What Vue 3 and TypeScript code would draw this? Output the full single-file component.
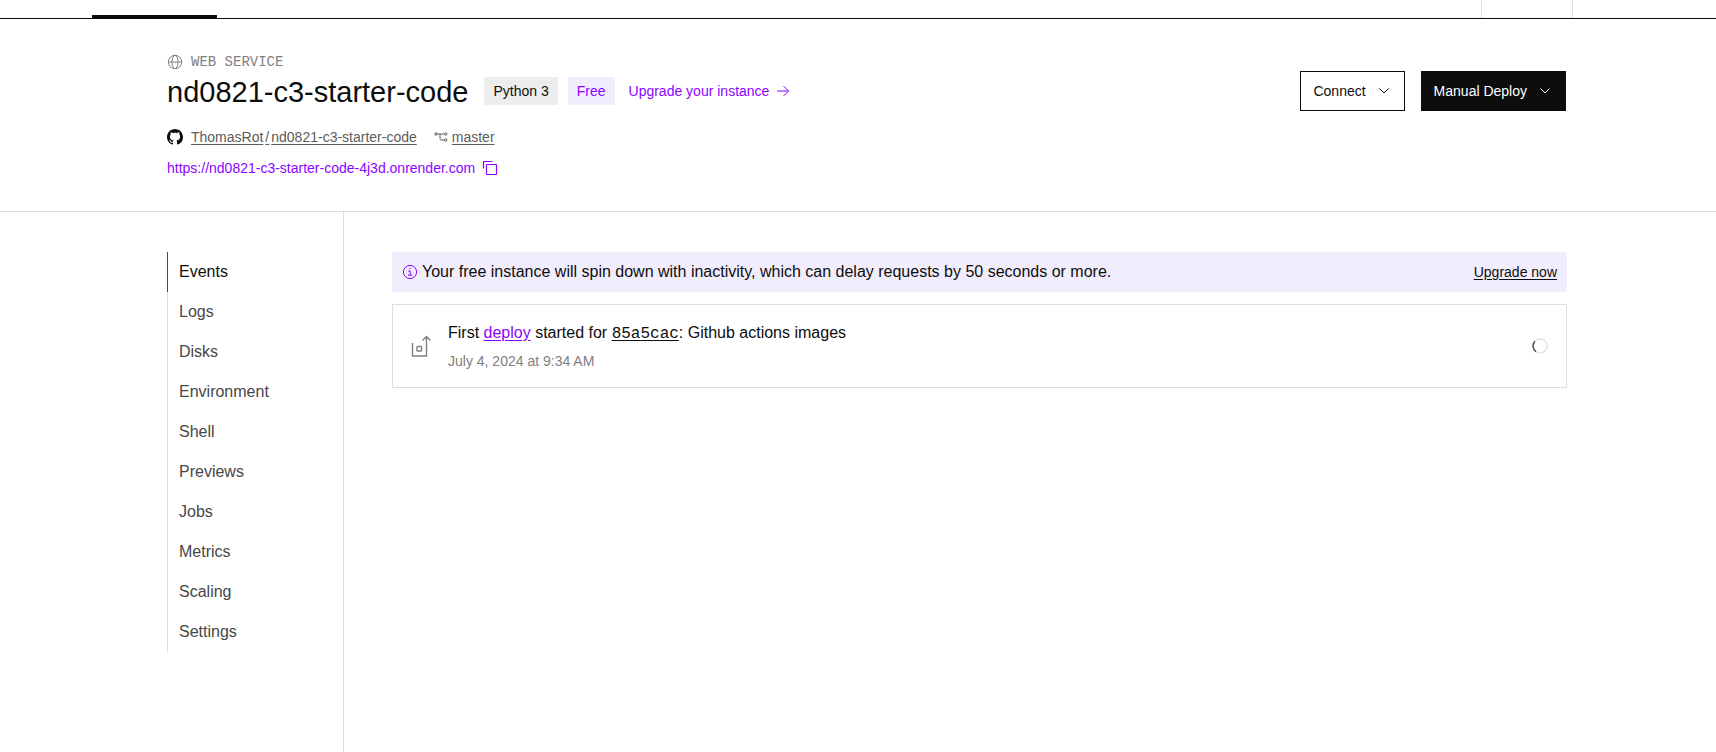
<script setup lang="ts">
interface NavItem {
  label: string
  href: string
  active?: boolean
}

const navItems: NavItem[] = [
  { label: 'Events', href: '#events', active: true },
  { label: 'Logs', href: '#logs' },
  { label: 'Disks', href: '#disks' },
  { label: 'Environment', href: '#environment' },
  { label: 'Shell', href: '#shell' },
  { label: 'Previews', href: '#previews' },
  { label: 'Jobs', href: '#jobs' },
  { label: 'Metrics', href: '#metrics' },
  { label: 'Scaling', href: '#scaling' },
  { label: 'Settings', href: '#settings' },
]
</script>

<template>
  <div class="page">
    <div class="topbar">
      <div class="topbar-tab"></div>
      <div class="topbar-cell"></div>
    </div>

    <header class="service-header">
      <div class="service-info">
        <div class="kind">
          <svg class="icon-16" viewBox="0 0 16 16" fill="none" stroke="currentColor">
            <circle cx="8" cy="8" r="6.7" />
            <ellipse cx="8" cy="8" rx="3" ry="6.7" />
            <path d="M1.3 8h13.4" />
          </svg>
          <span>WEB SERVICE</span>
        </div>
        <div class="title-row">
          <h1>nd0821-c3-starter-code</h1>
          <div class="badges">
            <span class="badge">Python 3</span>
            <span class="badge badge-free">Free</span>
          </div>
          <a class="upgrade" href="#upgrade">
            <span>Upgrade your instance</span>
            <svg class="icon-14" viewBox="0 0 14 14" fill="none" stroke="currentColor">
              <path d="M1 7h11.5M7.5 2l5 5-5 5" />
            </svg>
          </a>
        </div>
        <div class="repo-row">
          <svg class="icon-16 github" viewBox="0 0 16 16" fill="currentColor">
            <path d="M8 0C3.58 0 0 3.58 0 8c0 3.54 2.29 6.53 5.47 7.59.4.07.55-.17.55-.38 0-.19-.01-.82-.01-1.49-2.01.37-2.53-.49-2.69-.94-.09-.23-.48-.94-.82-1.13-.28-.15-.68-.52-.01-.53.63-.01 1.08.58 1.23.82.72 1.21 1.87.87 2.33.66.07-.52.28-.87.51-1.07-1.78-.2-3.64-.89-3.64-3.95 0-.87.31-1.59.82-2.15-.08-.2-.36-1.02.08-2.12 0 0 .67-.21 2.2.82.64-.18 1.32-.27 2-.27s1.36.09 2 .27c1.53-1.04 2.2-.82 2.2-.82.44 1.1.16 1.92.08 2.12.51.56.82 1.27.82 2.15 0 3.07-1.87 3.75-3.65 3.95.29.25.54.73.54 1.48 0 1.07-.01 1.93-.01 2.2 0 .21.15.46.55.38A8.01 8.01 0 0 0 16 8c0-4.42-3.58-8-8-8z" />
          </svg>
          <a class="repo" href="#repo">ThomasRot<span class="slash">/</span>nd0821-c3-starter-code</a>
          <svg class="icon-14 branch" viewBox="0 0 14 14" fill="none" stroke="currentColor">
            <circle cx="2" cy="4" r="1.2" />
            <path d="M3.2 4h7.2M6 4v4.5q0 1.5 1.5 1.5h3" />
            <rect x="10.5" y="2.8" width="2.4" height="2.4" rx="1" />
            <rect x="10.5" y="8.8" width="2.4" height="2.4" rx="1" />
          </svg>
          <a href="#branch">master</a>
        </div>
        <div class="url-row">
          <a href="#site">https://nd0821-c3-starter-code-4j3d.onrender.com</a>
          <button class="copy" type="button" aria-label="Copy URL">
            <svg class="icon-16" viewBox="0 0 16 16" fill="none" stroke="currentColor" stroke-width="1.2">
              <path d="M1.5 8.5v-7h9" />
              <rect x="4.5" y="4.5" width="10" height="10" rx=".5" />
            </svg>
          </button>
        </div>
      </div>

      <div class="actions">
        <button class="btn" type="button">
          <span>Connect</span>
          <svg class="icon-12" viewBox="0 0 12 12" fill="none" stroke="currentColor"><path d="M1.5 3.5 6 8l4.5-4.5" /></svg>
        </button>
        <button class="btn btn-dark" type="button">
          <span>Manual Deploy</span>
          <svg class="icon-12" viewBox="0 0 12 12" fill="none" stroke="currentColor"><path d="M1.5 3.5 6 8l4.5-4.5" /></svg>
        </button>
      </div>
    </header>

    <div class="body">
      <nav class="sidebar">
        <a
          v-for="item in navItems"
          :key="item.label"
          :href="item.href"
          :class="{ active: item.active }"
        >{{ item.label }}</a>
      </nav>

      <main class="content">
        <div class="banner">
          <svg class="icon-16 info" viewBox="0 0 16 16" fill="none" stroke="currentColor">
            <circle cx="8" cy="8" r="6.6" />
            <path d="M6.2 7h2v4M6 11.2h4.2M7.4 4.6h1.4" />
          </svg>
          <span class="banner-text">Your free instance will spin down with inactivity, which can delay requests by 50 seconds or more.</span>
          <a href="#upgrade">Upgrade now</a>
        </div>

        <article class="event">
          <svg class="event-icon" viewBox="0 0 20 22" fill="none" stroke="currentColor" stroke-width="1.4">
            <path d="M1.5 8v13h14V1.5M11.5 5.5l4-4 4 4" />
            <rect x="6" y="11.5" width="4.5" height="4.5" rx=".6" />
          </svg>
          <div class="event-text">
            <p>First <a class="deploy" href="#deploy">deploy</a> started for <a class="sha" href="#commit">85a5cac</a>: Github actions images</p>
            <time datetime="2024-07-04T09:34">July 4, 2024 at 9:34 AM</time>
          </div>
          <svg class="icon-16" viewBox="0 0 16 16" fill="none">
            <circle cx="8" cy="8" r="7" stroke="#e4e4e4" stroke-width="1.4" />
            <path d="M4 13.7A7 7 0 0 1 2.8 3.3" stroke="#444" stroke-width="1.4" />
          </svg>
        </article>
      </main>
    </div>
  </div>
</template>

<style>
body {
  margin: 0;
  background: #fff;
}
</style>

<style scoped>
* {
  box-sizing: border-box;
}

.page {
  display: flex;
  flex-direction: column;
  min-height: 100vh;
  font-family: 'Liberation Sans', Arial, sans-serif;
  font-size: 14px;
  line-height: 20px;
  color: #0d0d0d;
}

svg {
  display: block;
  flex: none;
}

.icon-12 { width: 12px; height: 12px; }
.icon-14 { width: 14px; height: 14px; }
.icon-16 { width: 16px; height: 16px; }

.topbar {
  display: flex;
  justify-content: space-between;
  height: 19px;
  padding: 0 143px 0 92px;
  border-bottom: 1px solid #0d0d0d;
}

.topbar-tab {
  width: 125px;
  border-bottom: 3px solid #0d0d0d;
}

.topbar-cell {
  width: 92px;
  border: solid #dedede;
  border-width: 0 1px;
}

.service-header {
  display: flex;
  justify-content: space-between;
  align-items: flex-start;
  padding: 33px 150px 33px 167px;
  border-bottom: 1px solid #dedede;
}

.kind {
  display: flex;
  align-items: center;
  gap: 8px;
  color: #808080;
  font-family: 'Liberation Mono', monospace;
}

.title-row {
  display: flex;
  align-items: center;
  height: 38px;
}

h1 {
  margin: 0;
  padding-top: 2px;
  font-size: 29px;
  line-height: 36px;
  font-weight: 400;
}

.badges {
  display: flex;
  gap: 10px;
  margin: 0 14px 0 16px;
}

.badge {
  padding: 4px 9px;
  background: #ededed;
}

.badge-free {
  background: #f2edfd;
  color: #8a05ff;
}

.upgrade {
  display: flex;
  align-items: center;
  gap: 7px;
  color: #8a05ff;
  text-decoration: none;
}

.repo-row {
  display: flex;
  align-items: center;
  margin-top: 17px;
  color: #0d0d0d;
}

.repo-row a {
  color: #5c5c5c;
  text-underline-offset: 2px;
}

.github {
  position: relative;
}

.repo {
  margin: 0 17px 0 8px;
}

.slash {
  padding: 0 2px;
}

.branch {
  margin-right: 4px;
  color: #5c5c5c;
}

.url-row {
  display: flex;
  align-items: center;
  gap: 7px;
  margin-top: 11px;
}

.url-row a,
.copy {
  color: #8a05ff;
  text-decoration: none;
}

.copy {
  padding: 0;
  border: 0;
  background: none;
}

.actions {
  display: flex;
  gap: 16px;
  margin-top: 19px;
}

.btn {
  display: flex;
  align-items: center;
  gap: 12px;
  height: 40px;
  padding: 0 14px 0 12px;
  border: 1px solid #0d0d0d;
  background: #fff;
  color: #0d0d0d;
  font: inherit;
}

.btn-dark {
  background: #0d0d0d;
  color: #fff;
}

.body {
  display: flex;
  flex: 1;
}

.sidebar {
  display: flex;
  flex-direction: column;
  width: 344px;
  flex: none;
  padding: 40px 0 40px 167px;
  border-right: 1px solid #dedede;
}

.sidebar a {
  padding: 8px 11px;
  border-left: 1px solid #dedede;
  color: #474747;
  font-size: 16px;
  line-height: 24px;
  text-decoration: none;
}

.sidebar a.active {
  border-left-color: #8a05ff;
  color: #0d0d0d;
}

.content {
  flex: 1;
  min-width: 0;
  padding: 40px 149px 40px 48px;
}

.banner {
  display: flex;
  align-items: center;
  gap: 4px;
  padding: 8px 10px;
  background: #f2edfd;
}

.info {
  color: #8a05ff;
}

.banner-text {
  flex: 1;
  font-size: 16px;
  line-height: 24px;
}

.banner a {
  color: #0d0d0d;
  text-underline-offset: 2px;
}

.event {
  display: flex;
  align-items: center;
  margin-top: 12px;
  padding: 16px 18px;
  border: 1px solid #dedede;
}

.event-icon {
  width: 20px;
  height: 22px;
  color: #808080;
}

.event-text {
  flex: 1;
  margin-left: 17px;
}

.event p {
  margin: 0 0 5px;
  font-size: 16px;
  line-height: 24px;
}

.event a {
  color: #0d0d0d;
  text-underline-offset: 2px;
}

.event a.deploy {
  color: #8a05ff;
}

.sha {
  font-family: 'Liberation Mono', monospace;
}

time {
  display: block;
  color: #808080;
}
</style>
